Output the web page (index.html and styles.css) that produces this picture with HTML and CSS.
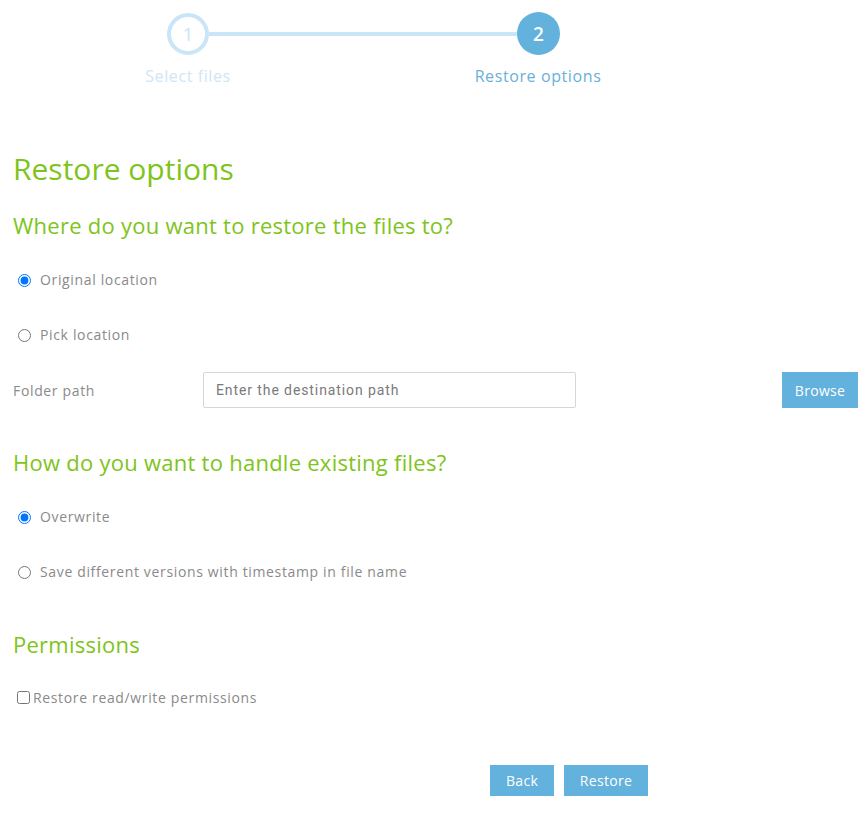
FILE: index.html
```html
<!DOCTYPE html>
<html lang="en">
<head>
<meta charset="utf-8">
<title>Restore options</title>
<link rel="stylesheet" href="styles.css">
</head>
<body>
<div class="page">
  <div class="stepper">
    <div class="track">
      <div class="circle done">1</div>
      <div class="line"></div>
      <div class="circle active">2</div>
    </div>
    <div class="labels">
      <div class="label done">Select files</div>
      <div class="label active">Restore options</div>
    </div>
  </div>

  <h1 class="title">Restore options</h1>

  <h2 class="section first">Where do you want to restore the files to?</h2>
  <label class="option first"><input type="radio" name="loc" checked><span>Original location</span></label>
  <label class="option"><input type="radio" name="loc"><span>Pick location</span></label>
  <div class="folder-row">
    <span class="field-label">Folder path</span>
    <input class="path-input" type="text" placeholder="Enter the destination path">
    <button class="btn browse" type="button">Browse</button>
  </div>

  <h2 class="section after-folder">How do you want to handle existing files?</h2>
  <label class="option first"><input type="radio" name="exist" checked><span>Overwrite</span></label>
  <label class="option"><input type="radio" name="exist"><span>Save different versions with timestamp in file name</span></label>

  <h2 class="section perms">Permissions</h2>
  <label class="check"><input type="checkbox"><span>Restore read/write permissions</span></label>

  <div class="actions">
    <button class="btn" type="button">Back</button>
    <button class="btn" type="button">Restore</button>
  </div>
</div>
</body>
</html>
```

FILE: styles.css
```css
* { box-sizing: border-box; }
html, body { margin: 0; padding: 0; background: #fff; }
body {
  font-family: "Open Sans", "Noto Sans", "Liberation Sans", sans-serif;
  color: #8a8a8a;
  font-size: 14px;
  letter-spacing: 0.65px;
}
.page {
  width: 868px;
  padding: 12px 10px 0 13px;
  display: flex;
  flex-direction: column;
  align-items: flex-start;
}
.stepper { align-self: stretch; }
.track {
  display: flex;
  align-items: center;
  padding-left: 154px;
}
.circle {
  width: 42px;
  height: 42px;
  border-radius: 50%;
  display: flex;
  align-items: center;
  justify-content: center;
  font-size: 19px;
  letter-spacing: 0;
}
.circle.done {
  border: 4px solid #c9e5f7;
  color: #c9e5f7;
}
.circle.active {
  width: 43px;
  height: 43px;
  background: #63b1dd;
  color: #fff;
  font-weight: 600;
}
.line {
  width: 308px;
  height: 4px;
  background: #c9e5f7;
}
.labels {
  display: grid;
  grid-template-columns: 160px 160px;
  column-gap: 190px;
  padding-left: 95px;
  margin-top: 11px;
}
.label {
  text-align: center;
  font-size: 16px;
  line-height: 20px;
  letter-spacing: 0.6px;
}
.label.done { color: #cfe6f6; }
.label.active { color: #6aafd9; }

.title {
  margin: 65px 0 0;
  font-size: 30px;
  line-height: 36px;
  font-weight: 400;
  letter-spacing: 0;
  color: #7ec41a;
}
.section {
  margin: 0;
  font-size: 22px;
  line-height: 24px;
  font-weight: 400;
  letter-spacing: 0.26px;
  color: #7ec41a;
}
.section.first { margin-top: 26px; }
.section.after-folder { margin-top: 42px; }
.section.perms { margin-top: 50px; }

.option {
  display: flex;
  align-items: center;
  height: 20px;
  line-height: 20px;
  margin-top: 35px;
}
.option.first { margin-top: 33px; }
.option input { margin: 0 3px 0 5px; width: 13px; height: 13px; }
.option span { margin-left: 6px; }

.folder-row {
  align-self: stretch;
  display: grid;
  grid-template-columns: 190px 373px 1fr;
  align-items: center;
  margin-top: 27px;
  height: 36px;
}
.path-input {
  height: 36px;
  border: 1px solid #d6d6d6;
  border-radius: 2px;
  padding: 0 12px;
  font-family: "Roboto", "Open Sans", sans-serif;
  font-size: 14px;
  letter-spacing: 0.9px;
  color: #555;
  outline: none;
}
.path-input::placeholder { color: #7a7a7a; }

.btn {
  border: 0;
  background: #63b1dd;
  color: #fff;
  font-family: "Open Sans", sans-serif;
  font-size: 14px;
  letter-spacing: 0.3px;
  height: 31px;
  padding: 0 15px;
  cursor: pointer;
}
.browse {
  justify-self: end;
  height: 36px;
  width: 76px;
  padding: 0;
}

.check {
  display: flex;
  align-items: center;
  height: 20px;
  margin-top: 31px;
}
.check input { margin: 0 3px 0 4px; width: 13px; height: 13px; }

.actions {
  display: flex;
  gap: 10px;
  margin: 58px 0 0 477px;
}
.actions .btn:first-child { width: 64px; padding: 0; }
.actions .btn:last-child { width: 84px; padding: 0; }
```
